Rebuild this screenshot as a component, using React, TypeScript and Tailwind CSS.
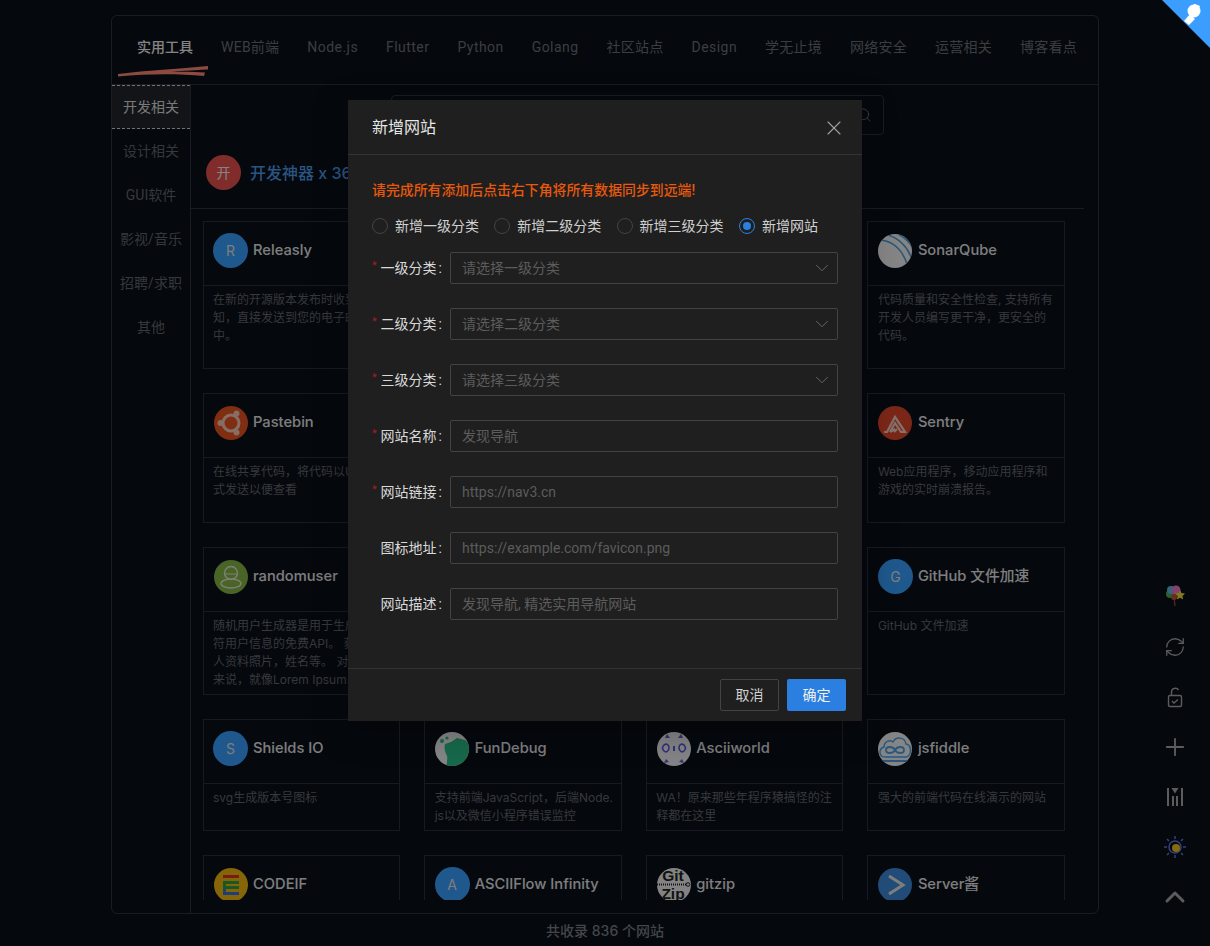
import type { ReactNode } from "react";
import { ChevronDown, ChevronUp, Plus, RefreshCw, Search, X } from "lucide-react";

const tabs = ["实用工具", "WEB前端", "Node.js", "Flutter", "Python", "Golang", "社区站点", "Design", "学无止境", "网络安全", "运营相关", "博客看点"];
const sideItems = ["开发相关", "设计相关", "GUI软件", "影视/音乐", "招聘/求职", "其他"];

function Letter({ ch }: { ch: string }) {
    return (
        <div className="w-[35px] h-[35px] rounded-full bg-[#38a0ff] flex items-center justify-center text-[14px] font-normal text-[#e4e4e4] shrink-0">
            {ch}
        </div>
    );
}

function Logo({ children, bg }: { children: ReactNode; bg: string }) {
    return (
        <svg viewBox="0 0 34 34" className="w-[34px] h-[34px] shrink-0 mx-[0.5px]">
            <clipPath id="logo-clip">
                <circle cx="17" cy="17" r="17" />
            </clipPath>
            <g clipPath="url(#logo-clip)">
                <rect width="34" height="34" fill={bg} />
                {children}
            </g>
        </svg>
    );
}

const sonar = (
    <Logo bg="#f2f2f2">
        <path d="M2 6c12 1 22 9 27 24M10 1c10 3 19 11 23 22M20 0c6 3 11 7 14 13" fill="none" stroke="#4b9fd5" strokeWidth="1.6" />
    </Logo>
);
const ubuntu = (
    <Logo bg="#e95420">
        <circle cx="17" cy="17" r="8" fill="none" stroke="#f4c9b6" strokeWidth="3" />
        <circle cx="6.5" cy="17" r="3" fill="#f4c9b6" />
        <circle cx="22.5" cy="7.5" r="3" fill="#f4c9b6" />
        <circle cx="22.5" cy="26.5" r="3" fill="#f4c9b6" />
    </Logo>
);
const sentry = (
    <Logo bg="#e1472d">
        <path d="M6 26l3 0 8-15 10 15h-4l-6-9-5 9M12 26l5-3M16 26l3-3" fill="none" stroke="#f3cfc6" strokeWidth="2.2" />
    </Logo>
);
const randomuser = (
    <Logo bg="#87b548">
        <circle cx="17" cy="13" r="6.500" fill="none" stroke="#e4ecd2" strokeWidth="1.400" />
        <path d="M10.500 14h13" stroke="#e4ecd2" strokeWidth="1.200" />
        <ellipse cx="17" cy="23.500" rx="10" ry="4.500" fill="none" stroke="#e4ecd2" strokeWidth="1.400" />
    </Logo>
);
const fundebug = (
    <Logo bg="#f2f2f2">
        <path d="M10 12l6-2 6-4 8 2 5 5v21H12c-1-3 1-7 0-10-2-4-3-8-2-12z" fill="#2bbf8a" />
        <circle cx="7" cy="9" r="2" fill="#2bbf8a" />
        <circle cx="12" cy="6" r="1.6" fill="#2bbf8a" />
    </Logo>
);
const asciiworld = (
    <Logo bg="#f0f0f5">
        <path d="M7 13c3-2 5 0 5 3s-3 5-5 3-2-4 0-6zM27 13c-3-2-5 0-5 3s3 5 5 3 2-4 0-6z" fill="none" stroke="#5a5ae6" strokeWidth="1.6" />
        <path d="M16 14h2v5h-2zM10 2l3 4-5 0zM24 2l-3 4 5 0zM9 27l3 3-5 1zM25 27l-3 3 5 1z" fill="#5a5ae6" />
    </Logo>
);
const jsfiddle = (
    <Logo bg="#f2f2f2">
        <path d="M7 25c-6 0-7-8-1-10 0-5 5-8 9-5 3-6 12-5 13 2 6 1 6 12 0 13z" fill="none" stroke="#4b9fe8" strokeWidth="1.400" />
        <path d="M17 18c-2-4-9-4-9 0s7 4 9 0 9-4 9 0-7 4-9 0z" fill="none" stroke="#4b9fe8" strokeWidth="1.800" />
        <path d="M3 29h28" stroke="#4b9fe8" strokeWidth="1.800" />
    </Logo>
);
const codeif = (
    <Logo bg="#f2b90f">
        <path d="M9 7h16v3H9z" fill="#d9352c" />
        <path d="M9 13h16v3H12v2h13v3H9z" fill="#2f9e44" />
        <path d="M9 21h3v3h13v3H9z" fill="#3b6fe0" />
    </Logo>
);
const gitzip = (
    <Logo bg="#eeeeee">
        <text x="16" y="13" textAnchor="middle" fontSize="15.500" fontWeight="700" fill="#222" fontFamily="Liberation Sans, sans-serif">Git</text>
        <path d="M0 16.500h30" stroke="#222" strokeWidth="2" strokeDasharray="1 1" />
        <circle cx="31" cy="16.500" r="1.800" fill="none" stroke="#222" />
        <text x="16" y="31" textAnchor="middle" fontSize="15.500" fontWeight="700" fill="#222" fontFamily="Liberation Sans, sans-serif">Zip</text>
    </Logo>
);
const serverChan = (
    <Logo bg="#3b8ad9">
        <path d="M11 8l14 9-14 9" fill="none" stroke="#e6e6e6" strokeWidth="3" />
    </Logo>
);

type Site = { name: string; icon: ReactNode; desc: string };

const sites: Site[] = [
    { name: "Releasly", icon: <Letter ch="R" />, desc: "在新的开源版本发布时收到通知，直接发送到您的电子邮件中。" },
    { name: "Can I use", icon: <Letter ch="C" />, desc: "前端兼容性自查工具，查询各个浏览器对网页特性的支持情况，覆盖桌面端与移动端的主流版本。" },
    { name: "Regexper", icon: <Letter ch="R" />, desc: "将正则表达式转换为直观的铁路图，帮助开发人员理解复杂规则。" },
    { name: "SonarQube", icon: sonar, desc: "代码质量和安全性检查, 支持所有开发人员编写更干净，更安全的代码。" },
    { name: "Pastebin", icon: ubuntu, desc: "在线共享代码，将代码以URL形式发送以便查看" },
    { name: "Carbon", icon: <Letter ch="C" />, desc: "创建并分享精美的源代码图片，支持多种主题、字体和导出格式，方便传播。" },
    { name: "JSON Editor", icon: <Letter ch="J" />, desc: "在线查看、编辑和格式化 JSON 数据的工具。" },
    { name: "Sentry", icon: sentry, desc: "Web应用程序，移动应用程序和游戏的实时崩溃报告。" },
    { name: "randomuser", icon: randomuser, desc: "随机用户生成器是用于生成占位\n符用户信息的免费API。 获取\n人资料照片，姓名等。 对于用户\n来说，就像Lorem Ipsum." },
    { name: "Mockoon", icon: <Letter ch="M" />, desc: "快速创建模拟接口服务的桌面工具。" },
    { name: "Postman", icon: <Letter ch="P" />, desc: "接口调试与协作开发平台。" },
    { name: "GitHub 文件加速", icon: <Letter ch="G" />, desc: "GitHub 文件加速" },
    { name: "Shields IO", icon: <Letter ch="S" />, desc: "svg生成版本号图标" },
    { name: "FunDebug", icon: fundebug, desc: "支持前端JavaScript，后端Node.js以及微信小程序错误监控" },
    { name: "Asciiworld", icon: asciiworld, desc: "WA！原来那些年程序猿搞怪的注释都在这里" },
    { name: "jsfiddle", icon: jsfiddle, desc: "强大的前端代码在线演示的网站" },
    { name: "CODEIF", icon: codeif, desc: "帮开发者给变量命名的工具" },
    { name: "ASCIIFlow Infinity", icon: <Letter ch="A" />, desc: "在线绘制 ASCII 流程图" },
    { name: "gitzip", icon: gitzip, desc: "下载 GitHub 仓库的子目录" },
    { name: "Server酱", icon: serverChan, desc: "从服务器推送消息到手机的工具" },
];

function SiteCard({ site }: { site: Site }) {
    return (
        <div className="border border-[#2b323c] flex flex-col">
            <div className="h-[64px] shrink-0 flex items-center gap-[5px] pl-[9.500px] pr-[8px] pb-[6px] border-b border-[#2b323c] text-[14.700px] font-medium text-[#e6e6e6] whitespace-nowrap">
                {site.icon}
                <span>{site.name}</span>
            </div>
            <p className="pl-[9.500px] pr-[7px] py-[5px] text-[12px] leading-[18px] text-[#63686e] break-all whitespace-pre-line">{site.desc}</p>
        </div>
    );
}

function Radio({ label, checked }: { label: string; checked?: boolean }) {
    return (
        <div className="flex items-center gap-[7px]">
            <span className={`w-[16px] h-[16px] rounded-full border flex items-center justify-center ${checked ? "border-[#2b7fe0]" : "border-[#434343]"}`}>
                {checked && <span className="w-[8px] h-[8px] rounded-full bg-[#2b7fe0]" />}
            </span>
            <span>{label}</span>
        </div>
    );
}

function FormRow({ label, required, placeholder, select }: { label: string; required?: boolean; placeholder: string; select?: boolean }) {
    return (
        <div className="flex items-center h-[32px]">
            <label className="w-[70px] shrink-0 flex justify-end items-center text-[#d9d9d9] relative">
                {required && <span className="absolute left-0 top-[1px] text-[#a61d24] text-[11px] leading-[14px]">*</span>}
                {label}
                <span className="ml-[2px]">:</span>
            </label>
            <div className="ml-[8px] flex-1 h-[32px] border border-[#434343] rounded-[2px] flex items-center justify-between px-[11px] text-[#5c5c5c]">
                {select ? (
                    <>
                        <span>{placeholder}</span>
                        <ChevronDown size={22} strokeWidth={1} className="text-[#6a6a6a] -mr-[7px]" />
                    </>
                ) : (
                    <input readOnly placeholder={placeholder} className="w-full bg-transparent outline-none placeholder:text-[#5c5c5c]" />
                )}
            </div>
        </div>
    );
}

function ToolSlot({ children }: { children: ReactNode }) {
    return <div className="h-[24px] flex items-center justify-center">{children}</div>;
}

function SideTools() {
    return (
        <div className="absolute right-[23px] top-[583px] w-[24px] flex flex-col items-center gap-[26px] text-[#a8a8a8]">
            <div className="mb-[2px]">
                <ToolSlot>
                    <svg viewBox="0 0 24 24" className="w-[24px] h-[24px]">
                        <path d="M11 14l1 9" stroke="#8a4a30" strokeWidth="1.400" />
                        <circle cx="7" cy="11" r="4" fill="#4caf50" />
                        <circle cx="8" cy="7" r="4" fill="#5bb8e8" />
                        <circle cx="13" cy="7" r="4.500" fill="#e87ac8" />
                        <circle cx="11" cy="14" r="3" fill="#c2553a" />
                        <path d="M17 7l1.500 3 3.500.5-2.500 2.500.6 3.500-3.100-1.700-3 1.700.5-3.500-2.500-2.500 3.500-.5z" fill="#f5d63d" />
                    </svg>
                </ToolSlot>
            </div>
            <ToolSlot>
                <RefreshCw size={22} strokeWidth={1.4} />
            </ToolSlot>
            <ToolSlot>
                <svg viewBox="0 0 24 24" className="w-[24px] h-[24px]" fill="none" stroke="currentColor" strokeWidth="1.400">
                    <rect x="5.500" y="10.500" width="13" height="11" rx="1.500" />
                    <path d="M8.500 10.500V7a3.800 3.800 0 0 1 7-2" />
                    <path d="M9 16l2 2 4-3.500" />
                </svg>
            </ToolSlot>
            <ToolSlot>
                <Plus size={28} strokeWidth={1.6} />
            </ToolSlot>
            <ToolSlot>
                <svg viewBox="0 0 24 24" className="w-[24px] h-[24px]" fill="currentColor">
                    <rect x="4" y="3" width="2" height="18" />
                    <rect x="18" y="3" width="2" height="18" />
                    <rect x="9" y="11" width="2" height="10" />
                    <rect x="13" y="11" width="2" height="10" />
                    <path d="M8.500 3h7L12 8.500z" />
                </svg>
            </ToolSlot>
            <ToolSlot>
                <svg viewBox="0 0 24 24" className="w-[24px] h-[24px]" fill="none">
                    <circle cx="12" cy="12" r="6" stroke="#5b78e8" strokeWidth="1.500" />
                    <circle cx="13" cy="13" r="4" fill="#f5c518" />
                    <path d="M12 1v3M12 20v3M1 12h3M20 12h3M4 4l2 2M18 18l2 2M4 20l2-2M18 6l2-2" stroke="#5b78e8" strokeWidth="1.500" />
                </svg>
            </ToolSlot>
            <ToolSlot>
                <ChevronUp size={32} strokeWidth={2.2} />
            </ToolSlot>
        </div>
    );
}

export default function App() {
    return (
        <div className="relative w-full h-[946px] overflow-hidden bg-[#0a0f19] text-[14px] [font-family:Inter,'Noto_Sans_CJK_SC',sans-serif]">
            <div className="flex flex-col items-center h-full pt-[15px]">
                <div className="w-[988px] h-[899px] border border-[#2f3640] rounded-[6px] flex flex-col shrink-0">
                    <div className="relative h-[69px] shrink-0 border-b border-[#2f3640] flex items-center pl-[11px] pb-[6px] [font-family:Roboto,'Noto_Sans_CJK_SC',sans-serif]">
                        {tabs.map((tab, i) => (
                            <span
                                key={tab}
                                className={`px-[14px] whitespace-nowrap ${i === 0 ? "text-[#f0f0f0] font-medium" : "text-[#6c7177]"} ${/^[A-Za-z.]+$/.test(tab) ? "tracking-[0.45px]" : i === 0 ? "" : "tracking-[0.25px]"}`}
                            >
                                {tab}
                            </span>
                        ))}
                        <svg viewBox="0 0 92 12" className="absolute left-[6px] top-[50px] w-[92px] h-[12px]">
                            <path d="M0 8C30 4 60 3 90 0L90 3.500C72 4.500 60 5 52 6C66 5.500 78 6 87 6.500L86 10C60 7.500 30 7.500 0 10.500z" fill="#ff8876" />
                        </svg>
                    </div>
                    <div className="flex-1 min-h-0 flex">
                        <div className="w-[79px] shrink-0 border-r border-[#2f3640] text-center text-[#62676d] [font-family:Roboto,'Noto_Sans_CJK_SC',sans-serif]">
                            {sideItems.map((item, i) => (
                                <div key={item} className={`h-[44px] flex items-center justify-center whitespace-nowrap ${i === 0 ? "bg-[#22262c] text-[#dcdcdc] border-y border-dashed border-[#d0d0d0]" : ""}`}>
                                    {item}
                                </div>
                            ))}
                        </div>
                        <div className="flex-1 min-w-0 pr-[14px] pb-[13px] flex flex-col">
                            <div className="flex-1 min-h-0 overflow-hidden">
                                <div className="h-[124px] border-b border-[#2f3640] pt-[10px] flex flex-col">
                                    <div className="self-center w-[493px] h-[40px] border border-[#2f3640] rounded-[4px] flex items-center justify-end pr-[11px] text-[#7a7a7a]">
                                        <Search size={16} strokeWidth={1.3} />
                                    </div>
                                    <div className="flex items-center gap-[9px] mt-[20px] pl-[15px]">
                                        <div className="w-[35px] h-[35px] rounded-full bg-[#e8514f] flex items-center justify-center text-[14px] text-[#f0f0f0]">开</div>
                                        <span className="text-[16px] font-medium text-[#4b9be8]">开发神器 x 36</span>
                                    </div>
                                </div>
                                <div className="grid grid-cols-4 gap-[24px] mt-[12px] pl-[11.500px] pr-[19px]">
                                    {sites.map((site) => (
                                        <SiteCard key={site.name} site={site} />
                                    ))}
                                </div>
                            </div>
                        </div>
                    </div>
                </div>
                <div className="flex-1 flex items-center justify-center font-medium text-[#7c8086]">共收录 836 个网站</div>
            </div>
            <SideTools />

            <div className="absolute inset-0 bg-black/45 flex justify-center pt-[100px]">
                <div className="w-[514px] h-[621px] bg-[#1f1f1f] flex flex-col shadow-[0_9px_28px_8px_rgba(0,0,0,0.2)] text-[#d0d0d0] [font-family:Roboto,'Noto_Sans_CJK_SC',sans-serif]">
                    <div className="h-[55px] shrink-0 border-b border-[#333333] flex items-center justify-between pl-[24px] pr-[16px] pt-[1px]">
                        <span className="text-[16px] text-[#e6e6e6]">新增网站</span>
                        <X size={24} strokeWidth={1.1} className="text-[#a0a0a0]" />
                    </div>
                    <div className="flex-1 px-[24px] pt-[24px]">
                        <p className="h-[22px] leading-[22px] mb-[14px] text-[13.900px] font-medium text-[#e8590c]">请完成所有添加后点击右下角将所有数据同步到远端!</p>
                        <div className="flex gap-[15.300px] h-[22px] items-center mb-[15px]">
                            <Radio label="新增一级分类" />
                            <Radio label="新增二级分类" />
                            <Radio label="新增三级分类" />
                            <Radio label="新增网站" checked />
                        </div>
                        <div className="flex flex-col gap-[24px]">
                            <FormRow required label="一级分类" placeholder="请选择一级分类" select />
                            <FormRow required label="二级分类" placeholder="请选择二级分类" select />
                            <FormRow required label="三级分类" placeholder="请选择三级分类" select />
                            <FormRow required label="网站名称" placeholder="发现导航" />
                            <FormRow required label="网站链接" placeholder="https://nav3.cn" />
                            <FormRow label="图标地址" placeholder="https://example.com/favicon.png" />
                            <FormRow label="网站描述" placeholder="发现导航, 精选实用导航网站" />
                        </div>
                    </div>
                    <div className="h-[53px] shrink-0 border-t border-[#333333] flex items-center justify-end gap-[8px] px-[16px]">
                        <button className="w-[59px] h-[32px] border border-[#434343] rounded-[2px] text-[#d0d0d0]">取消</button>
                        <button className="w-[59px] h-[32px] bg-[#2b7fe0] rounded-[2px] text-[#f0f0f0]">确定</button>
                    </div>
                </div>
            </div>

            <svg viewBox="0 0 48 48" className="absolute right-0 top-0 w-[48px] h-[48px]">
                <path d="M0 0h48v48z" fill="#3b9eff" />
                <circle cx="32" cy="11" r="6.500" fill="#ffffff" />
                <path d="M28 6l5-2 5 2-2 6zM22 21l6-7 5 5-6 6z" fill="#ffffff" />
            </svg>
        </div>
    );
}
